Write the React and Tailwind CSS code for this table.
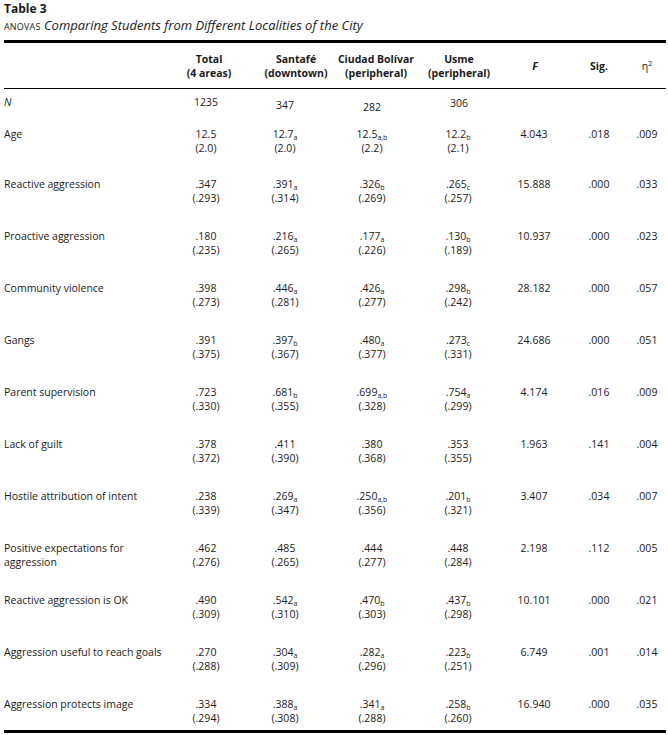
import React from 'react';

const rows = [
  { label: 'Age', h: 'h-[50px]', t: ['12.5', '(2.0)'], s: ['12.7', '(2.0)', 'a'], c: ['12.5', '(2.2)', 'a,b'], u: ['12.2', '(2.1)', 'b'], f: '4.043', sig: '.018', eta: '.009' },
  { label: 'Reactive aggression', t: ['.347', '(.293)'], s: ['.391', '(.314)', 'a'], c: ['.326', '(.269)', 'b'], u: ['.265', '(.257)', 'c'], f: '15.888', sig: '.000', eta: '.033' },
  { label: 'Proactive aggression', t: ['.180', '(.235)'], s: ['.216', '(.265)', 'a'], c: ['.177', '(.226)', 'a'], u: ['.130', '(.189)', 'b'], f: '10.937', sig: '.000', eta: '.023' },
  { label: 'Community violence', t: ['.398', '(.273)'], s: ['.446', '(.281)', 'a'], c: ['.426', '(.277)', 'a'], u: ['.298', '(.242)', 'b'], f: '28.182', sig: '.000', eta: '.057' },
  { label: 'Gangs', t: ['.391', '(.375)'], s: ['.397', '(.367)', 'b'], c: ['.480', '(.377)', 'a'], u: ['.273', '(.331)', 'c'], f: '24.686', sig: '.000', eta: '.051' },
  { label: 'Parent supervision', t: ['.723', '(.330)'], s: ['.681', '(.355)', 'b'], c: ['.699', '(.328)', 'a,b'], u: ['.754', '(.299)', 'a'], f: '4.174', sig: '.016', eta: '.009' },
  { label: 'Lack of guilt', t: ['.378', '(.372)'], s: ['.411', '(.390)'], c: ['.380', '(.368)'], u: ['.353', '(.355)'], f: '1.963', sig: '.141', eta: '.004' },
  { label: 'Hostile attribution of intent', t: ['.238', '(.339)'], s: ['.269', '(.347)', 'a'], c: ['.250', '(.356)', 'a,b'], u: ['.201', '(.321)', 'b'], f: '3.407', sig: '.034', eta: '.007' },
  { label: ['Positive expectations for', 'aggression'], t: ['.462', '(.276)'], s: ['.485', '(.265)'], c: ['.444', '(.277)'], u: ['.448', '(.284)'], f: '2.198', sig: '.112', eta: '.005' },
  { label: 'Reactive aggression is OK', t: ['.490', '(.309)'], s: ['.542', '(.310)', 'a'], c: ['.470', '(.303)', 'b'], u: ['.437', '(.298)', 'b'], f: '10.101', sig: '.000', eta: '.021' },
  { label: 'Aggression useful to reach goals', t: ['.270', '(.288)'], s: ['.304', '(.309)', 'a'], c: ['.282', '(.296)', 'a'], u: ['.223', '(.251)', 'b'], f: '6.749', sig: '.001', eta: '.014' },
  { label: 'Aggression protects image', h: 'h-[33px]', t: ['.334', '(.294)'], s: ['.388', '(.308)', 'a'], c: ['.341', '(.288)', 'a'], u: ['.258', '(.260)', 'b'], f: '16.940', sig: '.000', eta: '.035' },
];

const grid = 'grid grid-cols-[156px_98px_76px_84px_82px_70px_58px_38px]';

function Val({ v, className }) {
  const [m, sd, sub] = v;
  return (
    <div className={`flex flex-col items-center ${className}`}>
      <span>
        {m}
        {sub && <sub className="text-[7px]">{sub}</sub>}
      </span>
      <span>{sd}</span>
    </div>
  );
}

export default function App() {
  return (
    <div className="min-h-[735px] w-[668px] bg-white pl-[4px] pt-[1px] text-[#1a1a1a] [font-family:'Open_Sans',sans-serif]">
      <div className="text-[12px] font-bold leading-[16px]">Table 3</div>
      <div className="h-[16px] text-[13px] leading-[16px]">
        <span className="text-[9px] tracking-[0.02em]">ANOVAS</span>{' '}
        <em>Comparing Students from Different Localities of the City</em>
      </div>

      <div className="mt-[7px] w-[662px] border-y-[3px] border-black text-[10.5px] leading-[14px]">
        <div className={`${grid} h-[46px] items-center border-b border-black text-center font-bold`}>
          <div />
          <div>Total<br />(4 areas)</div>
          <div>Santafé<br />(downtown)</div>
          <div>Ciudad Bolívar<br />(peripheral)</div>
          <div>Usme<br />(peripheral)</div>
          <div className="italic">F</div>
          <div>Sig.</div>
          <div className="font-normal">η<sup className="text-[7px]">2</sup></div>
        </div>

        <div className="pt-[6px]">
          <div className={`${grid} h-[32px] items-start text-center`}>
            <div className="text-left italic">N</div>
            <div className="pr-[6px]">1235</div>
            <div className="pr-[22px] pt-[3px]">347</div>
            <div className="pr-[8px] pt-[5px]">282</div>
            <div className="pt-[1px]">306</div>
            <div />
            <div />
            <div />
          </div>

          {rows.map((r) => (
            <div key={Array.isArray(r.label) ? r.label[0] : r.label} className={`${grid} ${r.h || 'h-[52px]'} items-start text-center`}>
              <div className="whitespace-nowrap text-left">
                {Array.isArray(r.label) ? (
                  <>
                    {r.label[0]}
                    <br />
                    {r.label[1]}
                  </>
                ) : (
                  r.label
                )}
              </div>
              <Val v={r.t} className="pr-[6px]" />
              <Val v={r.s} className="pr-[22px]" />
              <Val v={r.c} className="pr-[8px]" />
              <Val v={r.u} className="pr-[2px]" />
              <div className="pr-[2px]">{r.f}</div>
              <div>{r.sig}</div>
              <div>{r.eta}</div>
            </div>
          ))}
        </div>
      </div>
    </div>
  );
}
